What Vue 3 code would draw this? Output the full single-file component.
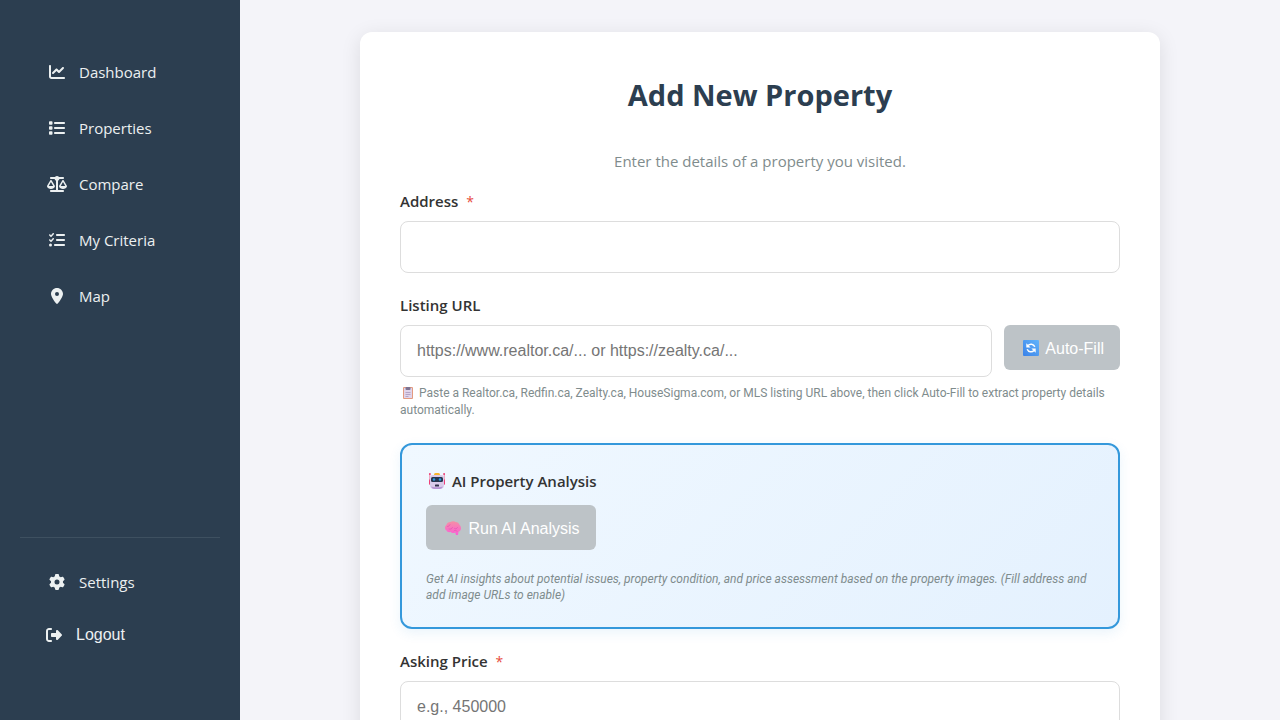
<script setup>
import { ref } from 'vue'

const address = ref('')
const listingUrl = ref('')
const askingPrice = ref('')

const links = [
  {
    label: 'Dashboard',
    box: '0 0 512 512',
    width: 16,
    path: 'M64 64c0-17.7-14.3-32-32-32S0 46.3 0 64V400c0 44.2 35.8 80 80 80H480c17.7 0 32-14.3 32-32s-14.3-32-32-32H80c-8.8 0-16-7.2-16-16V64zm406.6 86.6c12.5-12.5 12.5-32.8 0-45.3s-32.8-12.5-45.3 0L320 210.7l-57.4-57.4c-12.5-12.5-32.8-12.5-45.3 0l-112 112c-12.5 12.5-12.5 32.8 0 45.3s32.8 12.5 45.3 0L240 221.3l57.4 57.4c12.5 12.5 32.8 12.5 45.3 0l128-128z'
  },
  {
    label: 'Properties',
    box: '0 0 512 512',
    width: 16,
    path: 'M24 40H88c13.3 0 24 10.7 24 24v64c0 13.3-10.7 24-24 24H24c-13.3 0-24-10.7-24-24V64c0-13.3 10.7-24 24-24zM192 64c-17.7 0-32 14.3-32 32s14.3 32 32 32H480c17.7 0 32-14.3 32-32s-14.3-32-32-32H192zm0 160c-17.7 0-32 14.3-32 32s14.3 32 32 32H480c17.7 0 32-14.3 32-32s-14.3-32-32-32H192zm0 160c-17.7 0-32 14.3-32 32s14.3 32 32 32H480c17.7 0 32-14.3 32-32s-14.3-32-32-32H192zM24 200H88c13.3 0 24 10.7 24 24v64c0 13.3-10.7 24-24 24H24c-13.3 0-24-10.7-24-24v-64c0-13.3 10.7-24 24-24zM24 360H88c13.3 0 24 10.7 24 24v64c0 13.3-10.7 24-24 24H24c-13.3 0-24-10.7-24-24v-64c0-13.3 10.7-24 24-24z'
  },
  {
    label: 'Compare',
    box: '0 0 640 512',
    width: 20,
    path: 'M384 32H512c17.7 0 32 14.3 32 32s-14.3 32-32 32H398.4c-5.2 25.8-22.9 47.1-46.4 57.3V448H512c17.7 0 32 14.3 32 32s-14.3 32-32 32H320 128c-17.7 0-32-14.3-32-32s14.3-32 32-32H288V153.3c-23.5-10.3-41.2-31.6-46.4-57.3H128c-17.7 0-32-14.3-32-32s14.3-32 32-32H256c14.6-19.4 37.8-32 64-32s49.4 12.6 64 32zm55.6 288H584.4L512 195.8 439.6 320zM512 416c-62.9 0-115.2-34-126-78.9c-2.6-11 1-22.3 6.7-32.1l95.2-163.2c5-8.6 14.2-13.8 24.1-13.8s19.1 5.3 24.1 13.8l95.2 163.2c5.7 9.8 9.3 21.1 6.7 32.1C627.2 382 574.9 416 512 416zM126.8 195.8L54.4 320H199.3L126.8 195.8zM.9 337.1c-2.6-11 1-22.3 6.7-32.1l95.2-163.2c5-8.6 14.2-13.8 24.1-13.8s19.1 5.3 24.1 13.8l95.2 163.2c5.7 9.8 9.3 21.1 6.7 32.1C242 382 189.7 416 126.8 416S11.7 382 .9 337.1z'
  },
  {
    label: 'My Criteria',
    box: '0 0 512 512',
    width: 16,
    path: 'M152.1 38.2c9.9 8.9 10.7 24 1.8 33.9l-72 80c-4.4 4.9-10.6 7.8-17.2 7.9s-12.9-2.4-17.6-7L7 113C-2.3 103.6-2.3 88.4 7 79s24.6-9.4 33.9 0l22.1 22.1 55.1-61.2c8.9-9.9 24-10.7 33.9-1.8zm0 160c9.9 8.9 10.7 24 1.8 33.9l-72 80c-4.4 4.9-10.6 7.8-17.2 7.9s-12.9-2.4-17.6-7L7 273c-9.4-9.4-9.4-24.6 0-33.9s24.6-9.4 33.9 0l22.1 22.1 55.1-61.2c8.9-9.9 24-10.7 33.9-1.8zM224 96c0-17.7 14.3-32 32-32H480c17.7 0 32 14.3 32 32s-14.3 32-32 32H256c-17.7 0-32-14.3-32-32zm0 160c0-17.7 14.3-32 32-32H480c17.7 0 32 14.3 32 32s-14.3 32-32 32H256c-17.7 0-32-14.3-32-32zM160 416c0-17.7 14.3-32 32-32H480c17.7 0 32 14.3 32 32s-14.3 32-32 32H192c-17.7 0-32-14.3-32-32zM48 368a48 48 0 1 1 0 96 48 48 0 1 1 0-96z'
  },
  {
    label: 'Map',
    box: '0 0 384 512',
    width: 12,
    path: 'M215.7 499.2C267 435 384 279.4 384 192C384 86 298 0 192 0S0 86 0 192c0 87.4 117 243 168.3 307.2c12.3 15.3 35.1 15.3 47.4 0zM192 128a64 64 0 1 1 0 128 64 64 0 1 1 0-128z'
  }
]
</script>

<template>
  <div class="shell">
    <aside class="sidebar">
      <nav class="nav" aria-label="Main">
        <a v-for="link in links" :key="link.label" class="nav-link" href="#">
          <span class="nav-icon">
            <svg :viewBox="link.box" :width="link.width" height="16" aria-hidden="true"><path :d="link.path" /></svg>
          </span>
          <span>{{ link.label }}</span>
        </a>
      </nav>
      <div class="account">
        <a class="nav-link" href="#">
          <span class="nav-icon">
            <svg viewBox="0 0 512 512" width="16" height="16" aria-hidden="true">
              <path d="M495.9 166.6c3.2 8.7 .5 18.4-6.4 24.6l-43.3 39.4c1.1 8.3 1.7 16.8 1.7 25.4s-.6 17.1-1.7 25.4l43.3 39.4c6.9 6.2 9.6 15.9 6.4 24.6c-4.4 11.9-9.7 23.3-15.8 34.3l-4.7 8.1c-6.6 11-14 21.4-22.1 31.2c-5.9 7.2-15.7 9.6-24.5 6.8l-55.7-17.7c-13.4 10.3-28.2 18.9-44 25.4l-12.5 57.1c-2 9.1-9 16.3-18.2 17.8c-13.8 2.3-28 3.5-42.5 3.5s-28.7-1.2-42.5-3.5c-9.2-1.5-16.2-8.7-18.2-17.8l-12.5-57.1c-15.8-6.5-30.6-15.1-44-25.4L83.1 425.9c-8.8 2.8-18.6 .3-24.5-6.8c-8.1-9.8-15.5-20.2-22.1-31.2l-4.7-8.1c-6.1-11-11.4-22.4-15.8-34.3c-3.2-8.7-.5-18.4 6.4-24.6l43.3-39.4C64.6 273.1 64 264.6 64 256s.6-17.1 1.7-25.4L22.4 191.2c-6.9-6.2-9.6-15.9-6.4-24.6c4.4-11.9 9.7-23.3 15.8-34.3l4.7-8.1c6.6-11 14-21.4 22.1-31.2c5.9-7.2 15.7-9.6 24.5-6.8l55.7 17.7c13.4-10.3 28.2-18.9 44-25.4l12.5-57.1c2-9.1 9-16.3 18.2-17.8C227.3 1.2 241.5 0 256 0s28.7 1.2 42.5 3.5c9.2 1.5 16.2 8.7 18.2 17.8l12.5 57.1c15.8 6.5 30.6 15.1 44 25.4l55.7-17.7c8.8-2.8 18.6-.3 24.5 6.8c8.1 9.8 15.5 20.2 22.1 31.2l4.7 8.1c6.1 11 11.4 22.4 15.8 34.3zM256 336a80 80 0 1 0 0-160 80 80 0 1 0 0 160z" />
            </svg>
          </span>
          <span>Settings</span>
        </a>
        <button class="logout" type="button">
          <span class="nav-icon">
            <svg viewBox="0 0 512 512" width="16" height="16" aria-hidden="true">
              <path d="M377.9 105.9L500.7 228.7c7.2 7.2 11.3 17.1 11.3 27.3s-4.1 20.1-11.3 27.3L377.9 406.1c-6.4 6.4-15 9.9-24 9.9c-18.7 0-33.9-15.2-33.9-33.9l0-62.1-128 0c-17.7 0-32-14.3-32-32l0-64c0-17.7 14.3-32 32-32l128 0 0-62.1c0-18.7 15.2-33.9 33.9-33.9c9 0 17.6 3.6 24 9.9zM160 96L96 96c-17.7 0-32 14.3-32 32l0 256c0 17.7 14.3 32 32 32l64 0c17.7 0 32 14.3 32 32s-14.3 32-32 32l-64 0c-53 0-96-43-96-96L0 128C0 75 43 32 96 32l64 0c17.7 0 32 14.3 32 32s-14.3 32-32 32z" />
            </svg>
          </span>
          <span>Logout</span>
        </button>
      </div>
    </aside>

    <main class="content">
      <form class="card" @submit.prevent>
        <h1 class="title">Add New Property</h1>
        <p class="subtitle">Enter the details of a property you visited.</p>

        <div class="field">
          <label class="label" for="address">Address <span class="required">*</span></label>
          <input id="address" v-model="address" class="input" type="text" required />
        </div>

        <div class="field">
          <label class="label" for="listing-url">Listing URL</label>
          <div class="input-row">
            <input id="listing-url" v-model="listingUrl" class="input" type="url" placeholder="https://www.realtor.ca/... or https://zealty.ca/..." />
            <button class="action" type="button" disabled>
              <svg class="emoji" viewBox="0 0 16 16" width="16" height="16" aria-hidden="true">
                <defs>
                  <linearGradient id="sync-tile" x1="1" y1="0" x2="0" y2="1">
                    <stop offset="0" stop-color="#62b4fb" />
                    <stop offset="1" stop-color="#3b82e8" />
                  </linearGradient>
                </defs>
                <rect width="16" height="16" rx="1" fill="url(#sync-tile)" />
                <path d="M5 5.5C7 3.5 10.5 3.8 11.8 6.8M11 10.5C9 12.5 5.5 12.2 4.2 9.2" fill="none" stroke="#fff" stroke-width="1.5" />
                <path d="M3.3 3.2v4.3h4.3zM12.7 12.8V8.5H8.4z" fill="#fff" />
              </svg>
              Auto-Fill
            </button>
          </div>
          <p class="hint">
            <svg class="emoji small" viewBox="0 0 12 12" width="12" height="12" aria-hidden="true">
              <rect x="1" y="0" width="10" height="12" rx="1" fill="#e39a80" />
              <rect x="2" y="1" width="8" height="10" fill="#e0d4ea" />
              <path d="M3.5 5.5h5M3.5 7.5h5M3.5 9.5h3" stroke="#b5a4c6" stroke-width="1" />
              <rect x="3.5" y="0" width="5" height="3" rx="1" fill="#7d7392" />
            </svg>
            Paste a Realtor.ca, Redfin.ca, Zealty.ca, HouseSigma.com, or MLS listing URL above, then click Auto-Fill to extract property details automatically.
          </p>
        </div>

        <section class="analysis" aria-labelledby="analysis-heading">
          <h2 id="analysis-heading" class="label">
            <svg class="emoji" viewBox="0 0 16 16" width="16" height="16" aria-hidden="true">
              <path d="M.7 1v9M15.3 1v9" stroke="#f0a0bb" stroke-width="1.2" />
              <circle cx=".9" cy="1" r=".9" fill="#ef2f6b" />
              <circle cx="15.1" cy="1" r=".9" fill="#ef2f6b" />
              <rect y="6" width="16" height="6" rx="1.5" fill="#ee3f78" />
              <rect x="5" y="0" width="6" height="4" rx="1.5" fill="#f8b52e" />
              <path d="M4 2h8a3 3 0 0 1 3 3v7a4 4 0 0 1-4 4H5a4 4 0 0 1-4-4V5a3 3 0 0 1 3-3z" fill="#dacbea" />
              <path d="M2 13.5c2 1 10 1 12 0a4 4 0 0 1-3 2.5H5a4 4 0 0 1-3-2.5z" fill="#b795d4" />
              <rect x="2" y="4" width="12" height="5" rx="1.5" fill="#27364f" />
              <circle cx="5" cy="6.5" r="1.2" fill="#2f9be0" />
              <circle cx="11" cy="6.5" r="1.2" fill="#2f9be0" />
              <rect x="6" y="11.5" width="4" height="2" rx=".5" fill="#33314c" />
            </svg>
            AI Property Analysis
          </h2>
          <button class="action" type="button" disabled>
            <svg class="emoji" viewBox="0 0 16 16" width="16" height="16" aria-hidden="true">
              <defs>
                <linearGradient id="brain-fill" x1="0" y1="0" x2="0" y2="1">
                  <stop offset="0" stop-color="#f58fa5" />
                  <stop offset="1" stop-color="#fb5fd6" />
                </linearGradient>
              </defs>
              <path d="M0 8c0-1.5.5-2.5 1.5-3.3C2 2.8 3.8 1.8 5.5 2 7 .9 9.5 1 10.7 2c1.800 0 3.3 1.1 3.7 2.8C15.6 5.8 16 7 16 8.3c0 1.8-1 3.2-2.5 3.4L13 15h-2l-.8-2.6C8.5 13.5 6.5 13 5.8 12 3.5 12.4 2 12 1.6 10.6.6 10 0 9.2 0 8z" fill="url(#brain-fill)" />
              <path d="M2.5 6.5C4 6.5 4.5 5.5 5 4.5M4 9c1.5.5 3 0 3.5-1.5M9.5 8.5c1 .8 2.5.3 3-1M9 10.8c1-.8 2.5-.5 3 .4" fill="none" stroke="#e04fb0" stroke-width=".6" stroke-linecap="round" />
            </svg>
            Run AI Analysis
          </button>
          <p class="hint note">Get AI insights about potential issues, property condition, and price assessment based on the property images. (Fill address and add image URLs to enable)</p>
        </section>

        <div class="field">
          <label class="label" for="asking-price">Asking Price <span class="required">*</span></label>
          <input id="asking-price" v-model="askingPrice" class="input" type="text" inputmode="numeric" placeholder="e.g., 450000" required />
        </div>
      </form>
    </main>
  </div>
</template>

<style>
body {
  margin: 0;
  background: #f4f4f9;
}
</style>

<style scoped>
* {
  box-sizing: border-box;
}

.shell {
  display: flex;
  height: 100vh;
  color: #333;
  font-family: "Open Sans", "Noto Sans", sans-serif;
  font-size: 15px;
  line-height: 24px;
}

.sidebar {
  display: flex;
  flex: none;
  flex-direction: column;
  justify-content: space-between;
  width: 240px;
  padding: 48px 20px 61px;
  background: #2c3e50;
}

.nav {
  display: flex;
  flex-direction: column;
  gap: 8px;
}

.nav-link,
.logout {
  display: flex;
  align-items: center;
  gap: 12px;
  padding: 12px 24px;
  color: #ecf0f1;
  text-decoration: none;
}

.nav-link {
  border-left: 3px solid transparent;
}

.nav-icon {
  display: flex;
  justify-content: center;
  width: 20px;
}

.nav-icon svg {
  fill: currentColor;
}

.account {
  padding-top: 20px;
  border-top: 1px solid #3e5060;
}

.logout {
  width: 100%;
  margin-top: 5px;
  border: 0;
  background: none;
  font: 16px/24px "Liberation Sans", Arial, sans-serif;
  text-align: left;
}

.content {
  flex: 1;
  padding: 32px;
  overflow-y: auto;
  scrollbar-width: none;
}

.card {
  max-width: 800px;
  margin: 0 auto;
  padding: 40px;
  border-radius: 12px;
  background: #fff;
  box-shadow: 0 4px 20px rgba(0, 0, 0, 0.1);
}

.title {
  margin: 0 0 31px;
  color: #2c3e50;
  font-size: 29px;
  line-height: 46px;
  text-align: center;
}

.subtitle {
  margin: 0 0 16px;
  color: #7f8c8d;
  text-align: center;
}

.field {
  margin-bottom: 20px;
}

.label {
  display: block;
  margin: 0 0 8px;
  font-size: 15px;
  font-weight: 600;
  line-height: 24px;
}

.required {
  margin-left: 4px;
  color: #e74c3c;
  font-size: 14px;
  font-weight: 400;
  line-height: 1;
}

.input {
  display: block;
  width: 100%;
  min-width: 0;
  height: 52px;
  padding: 0 16px;
  border: 1px solid #ddd;
  border-radius: 8px;
  background: #fff;
  color: #333;
  font: 16px "Liberation Sans", Arial, sans-serif;
}

.input::placeholder {
  color: #757575;
}

.input-row {
  display: flex;
  align-items: flex-start;
  gap: 12px;
}

.action {
  flex: none;
  height: 45px;
  padding: 2px 16px 0;
  border: 0;
  border-radius: 6px;
  background: #bdc3c7;
  color: #fff;
  font: 16px "Liberation Sans", Arial, sans-serif;
}

.emoji {
  margin: 0 3px;
  vertical-align: -2px;
}

.emoji.small {
  margin: 0 2px;
}

.hint {
  margin: 8px 0 0;
  color: #7f8c8d;
  font-family: Roboto, "Open Sans", sans-serif;
  font-size: 12px;
  line-height: 17px;
}

.analysis {
  margin: 24px 0 20px;
  padding: 24px;
  border: 2px solid #3498db;
  border-radius: 12px;
  background: linear-gradient(135deg, #f0f8ff, #e4f1fe);
  box-shadow: 0 4px 12px rgba(52, 152, 219, 0.1);
}

.analysis .label {
  margin-bottom: 12px;
}

.note {
  margin-top: 21px;
  font-style: italic;
  line-height: 16px;
}
</style>
